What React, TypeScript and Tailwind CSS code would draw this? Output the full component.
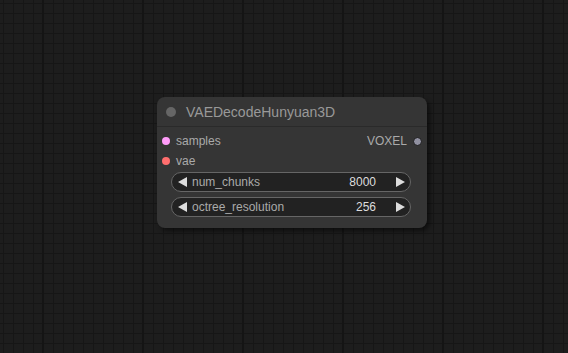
import React from 'react';

interface NumberWidgetProps {
  label: string;
  value: string;
}

const Arrow: React.FC<{ dir: 'left' | 'right' }> = ({ dir }) => (
  <svg width="10" height="10" viewBox="0 0 10 10" className="shrink-0">
    <path d={dir === 'left' ? 'M9 0 L9 10 L0 5 Z' : 'M1 0 L1 10 L10 5 Z'} fill="#ddd" />
  </svg>
);

const NumberWidget: React.FC<NumberWidgetProps> = ({ label, value }) => (
  <div className="flex h-5 w-[240px] items-center rounded-full border border-[#666] bg-[#222] pl-[6px] pr-[5px] text-xs">
    <Arrow dir="left" />
    <span className="ml-[4px] text-[#aaa]">{label}</span>
    <span className="ml-auto mr-[19px] text-[#ddd]">{value}</span>
    <Arrow dir="right" />
  </div>
);

const Slot: React.FC<{ label: string; color: string }> = ({ label, color }) => (
  <div className="flex h-5 items-center pl-[5px]">
    <span className={`h-2 w-2 rounded-full ${color}`} />
    <span className="ml-[6px] text-[#aaa]">{label}</span>
  </div>
);

export default function App() {
  return (
    <div
      className="relative h-[353px] w-[568px] overflow-hidden bg-[#1d1d1d] bg-[linear-gradient(to_right,#141414_2px,transparent_2px),linear-gradient(to_right,#161616_1px,transparent_1px),linear-gradient(to_bottom,#161616_1px,transparent_1px)] bg-[size:100px_100%,10px_10px,10px_10px] bg-[position:42px_0,3px_3px,3px_3px]"
      style={{ fontFamily: '"Liberation Sans", Arial, sans-serif' }}
    >
      <div className="absolute left-[157px] top-[97px] flex h-[131px] w-[270px] flex-col rounded-lg bg-[#353535] text-xs shadow-[3px_3px_4px_rgba(0,0,0,0.5)]">
        <div className="flex h-[30px] items-center border-b border-[#2a2a2a] pl-[9px]">
          <span className="h-[10px] w-[10px] rounded-full bg-[#666]" />
          <span className="ml-[10px] text-sm text-[#999]">VAEDecodeHunyuan3D</span>
        </div>
        <div className="relative mt-[4px]">
          <Slot label="samples" color="bg-[#ff9cf9]" />
          <Slot label="vae" color="bg-[#ff6e6e]" />
          <div className="absolute right-[5px] top-0 flex h-5 items-center">
            <span className="text-[#aaa]">VOXEL</span>
            <span className="ml-[6px] h-[9px] w-[9px] rounded-full border border-[#1a1a1a] bg-[#9090a0]" />
          </div>
        </div>
        <div className="ml-[14px] mt-[1px] flex flex-col gap-[5px]">
          <NumberWidget label="num_chunks" value="8000" />
          <NumberWidget label="octree_resolution" value="256" />
        </div>
      </div>
    </div>
  );
}
